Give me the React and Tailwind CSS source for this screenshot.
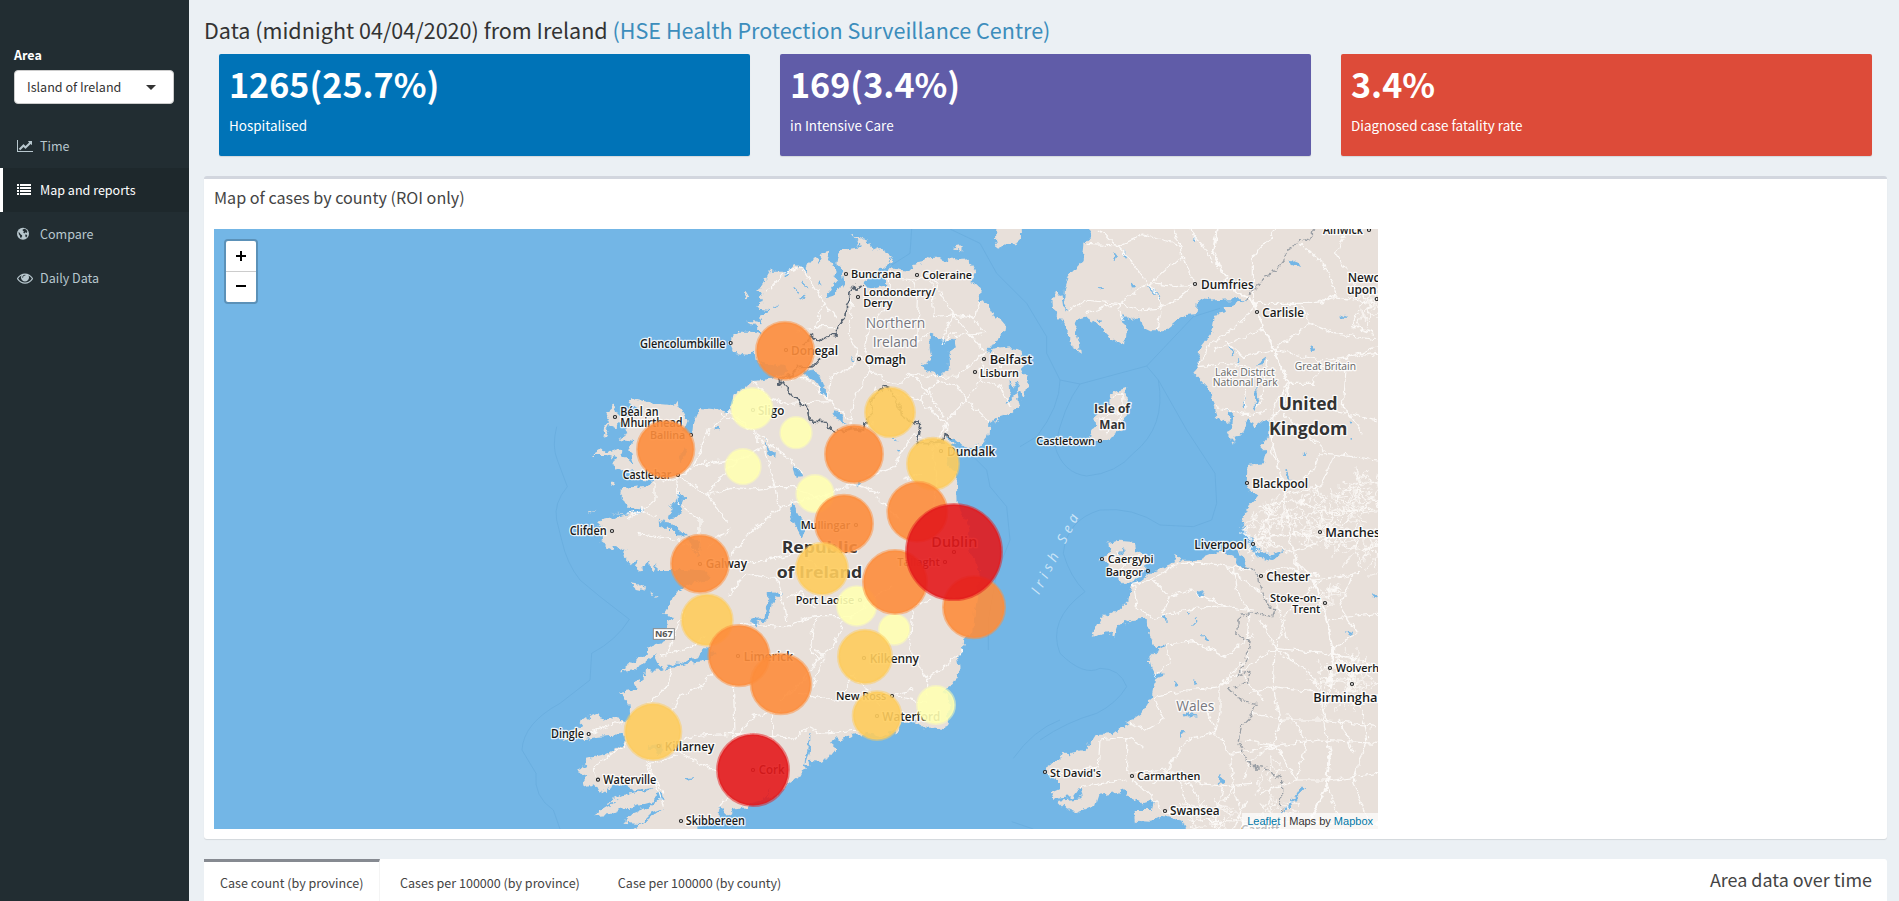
const F = "font-['Noto_Sans_CJK_SC','Source_Sans_Pro',sans-serif]";

/* ---------- map geometry (3 units per pixel) ---------- */
const IRELAND =
  'M1055 45L1068 50 1090 60 1108 66 1118 92 1138 84 1178 112 1172 124 1140 148 1115 168 1095 182 1094 202 1125 207 1155 200 1156 180 1142 165 1172 140 1200 150 1240 152 1236 136 1266 130 1290 112 1310 110 1340 124 1350 112 1375 120 1400 118 1415 132 1425 152 1418 185 1440 205 1435 236 1465 255 1485 292 1500 296 1516 315 1512 340 1495 356 1475 372 1466 386 1458 402 1485 388 1530 382 1552 384 1565 390 1570 430 1566 450 1586 468 1578 505 1570 535 1564 515 1552 518 1560 558 1530 582 1498 592 1468 612 1466 645 1445 672 1410 684 1378 668 1358 650 1340 654 1362 668 1345 690 1340 730 1372 760 1368 800 1370 850 1400 900 1410 925 1405 950 1408 990 1440 1050 1436 1100 1425 1170 1420 1230 1396 1255 1393 1280 1374 1310 1380 1355 1360 1390 1345 1405 1330 1412 1345 1440 1345 1480 1344 1500 1335 1525 1300 1520 1270 1528 1258 1512 1240 1506 1205 1510 1185 1545 1183 1530 1140 1552 1100 1540 1070 1545 1030 1555 1022 1566 1005 1558 990 1568 1010 1585 998 1600 990 1610 965 1625 950 1625 928 1622 932 1636 912 1630 920 1648 902 1654 905 1665 890 1672 865 1690 835 1725 800 1735 815 1705 790 1735 745 1750 740 1772 725 1758 700 1765 695 1785 680 1780 660 1762 650 1780 660 1792 640 1800 600 1805 570 1860 380 1860 400 1827 450 1795 490 1766 450 1782 420 1812 370 1808 400 1780 450 1762 470 1745 492 1738 488 1722 465 1720 462 1744 400 1760 360 1768 330 1782 278 1786 310 1766 345 1745 316 1750 345 1735 375 1722 440 1712 462 1700 400 1712 378 1698 345 1695 300 1720 285 1690 245 1697 265 1668 228 1652 265 1635 255 1620 305 1608 340 1590 378 1565 368 1545 300 1550 250 1558 225 1545 212 1555 185 1560 210 1537 240 1522 245 1505 270 1488 298 1477 296 1500 335 1492 372 1500 388 1490 385 1450 358 1418 410 1410 405 1388 430 1378 435 1350 475 1352 515 1342 560 1332 620 1325 650 1300 622 1280 600 1300 592 1316 570 1315 545 1332 520 1330 495 1346 475 1332 462 1305 430 1330 400 1348 362 1354 398 1325 440 1300 442 1282 470 1272 498 1265 492 1225 518 1188 488 1184 520 1135 538 1110 560 1095 625 1080 625 1055 560 1050 470 1050 468 1030 455 1055 450 1020 435 1045 405 1050 420 1018 395 1035 370 1010 376 985 362 990 325 980 300 962 310 945 290 930 305 918 290 905 335 895 385 886 330 878 365 885 410 880 436 868 385 860 372 845 365 830 370 805 455 795 466 780 390 775 402 750 370 758 340 735 350 715 320 705 275 705 300 690 320 697 355 685 365 700 385 725 400 738 388 690 400 662 350 655 385 640 370 600 345 622 330 615 310 655 315 622 330 604 318 578 345 555 352 580 390 590 412 562 380 545 400 538 450 550 510 555 530 547 550 580 560 600 548 630 576 645 580 610 600 560 640 565 690 577 700 530 760 480 840 470 862 455 850 430 800 435 770 420 765 385 745 405 700 398 684 365 715 335 755 335 790 345 770 320 740 305 790 310 780 290 810 270 765 265 775 250 795 245 782 232 790 220 765 208 785 200 810 155 850 155 856 170 885 135 910 145 922 158 920 140 930 118 945 110 955 132 970 100 988 95 980 120 998 130 1010 158 1000 165 1015 180 990 210 975 238 1000 230 1030 190 1026 160 1035 150 1012 130 1018 95 1040 88 1080 82 1075 65Z';
const BRITAIN =
  'M1778 0L1775 27 1770 50 1753 72 1748 120 1710 160 1695 205 1693 245 1708 270 1690 262 1684 225 1665 220 1657 240 1660 275 1690 308 1708 345 1718 385 1740 398 1735 360 1722 320 1728 298 1755 290 1790 312 1830 350 1875 378 1882 315 1865 300 1868 278 1890 300 1918 290 1926 320 1955 334 1990 334 2030 300 2055 285 2090 282 2095 235 2130 242 2180 238 2240 238 2200 255 2168 255 2175 280 2145 285 2135 340 2100 385 2098 440 2082 460 2120 500 2140 540 2150 585 2168 608 2188 600 2185 570 2200 585 2196 620 2182 630 2202 672 2205 650 2230 640 2245 592 2262 625 2300 595 2312 605 2306 650 2280 680 2300 700 2292 730 2242 735 2240 805 2262 820 2278 826 2240 870 2225 900 2232 918 2250 950 2270 985 2300 1005 2352 992 2315 1020 2272 1012 2245 975 2212 972 2205 985 2230 1020 2248 1048 2222 1042 2200 1010 2160 995 2090 1022 2045 1022 2022 1002 2025 1030 1980 1048 1945 1062 1895 1098 1885 1140 1860 1165 1805 1195 1775 1250 1830 1238 1842 1252 1850 1225 1890 1200 1940 1196 1945 1240 1965 1284 2000 1274 1970 1292 1948 1315 1960 1362 2002 1360 1966 1374 1956 1428 1925 1480 1880 1510 1840 1542 1790 1545 1782 1558 1750 1590 1710 1600 1706 1612 1690 1595 1682 1615 1635 1645 1650 1675 1680 1685 1680 1706 1650 1720 1660 1736 1720 1732 1742 1700 1748 1735 1675 1742 1700 1768 1728 1780 1785 1756 1795 1725 1858 1715 1866 1700 1885 1728 1930 1750 1962 1740 1955 1770 1900 1770 1905 1802 1950 1805 1990 1785 2040 1798 2055 1827 2065 1870 2680 1870 2680 0Z';
const ISLANDS = [
  'M1490 5L1562 5 1563 55 1548 68 1525 78 1515 76 1494 86 1488 60Z',
  'M1357 84L1385 78 1384 98 1376 88Z',
  'M1880 503L1880 545 1876 600 1860 635 1825 655 1800 665 1765 655 1782 625 1780 590 1805 570 1828 555 1830 520Z',
  'M1825 968L1860 962 1902 966 1905 990 1940 1008 1935 1050 1900 1085 1870 1092 1855 1075 1825 1050 1830 1030 1795 1020 1830 1000Z',
  'M388 1087L415 1090 438 1112 410 1106ZM448 1110L460 1118 455 1122ZM462 1128L476 1130 470 1136Z',
  'M735 218L752 230 738 240ZM330 785L352 785 335 795ZM260 878L290 872 270 880ZM820 96L834 104Z',
];
const WATER = [
  'M1295 345L1320 360 1360 358 1366 385 1344 400 1346 450 1318 466 1280 455 1270 435 1296 420 1290 380Z',
  'M1530 480L1540 508 1556 480 1545 530 1515 550 1532 518Z',
  'M905 455L945 450 965 480 985 535 965 512 948 484 918 466ZM1000 572L1015 575 1036 612 1008 590Z',
  'M480 905L510 910 532 925 556 945 525 945 505 925 488 925Z',
  'M538 820L552 838 530 890 505 896 518 855Z',
  'M560 955L598 960 605 985 590 1008 580 985Z',
  'M808 1122L845 1122 818 1142 810 1195 775 1200 772 1225 752 1198 795 1190Z',
  'M880 850L892 880 918 925 905 950 890 920 872 880Z',
  'M790 655L802 680 822 700 832 712 808 700ZM880 735L905 770 890 772ZM650 620L656 626 648 630ZM555 680L560 690 545 725 540 700Z',
  'M835 255L820 262 832 260ZM888 205L898 218 892 215ZM912 225L902 235 916 228ZM960 185L966 195 960 192ZM910 185L920 205 915 196Z',
  'M1055 410L1062 420 1056 418ZM1180 655L1195 665 1188 662ZM1080 780L1070 800 1082 790ZM1190 690L1200 695 1192 697Z',
  'M2370 120L2395 130 2402 142 2378 138ZM2268 500L2275 530 2265 570ZM2190 380L2202 405 2196 400ZM2268 435L2300 412 2290 430ZM2210 415L2216 435 2210 430ZM2235 530L2230 570 2228 560Z',
  'M1840 95L1850 108 1846 125ZM1870 95L1882 108 1878 118ZM1895 190L1905 195 1900 205ZM2520 285L2538 292 2522 292ZM2435 380L2448 386 2440 390ZM1795 205L1808 208 1798 210ZM1795 296L1805 300 1798 305Z',
  'M1944 200L1965 215 1980 235 1960 220ZM2080 55L2090 52 2084 62Z',
  'M2108 1112L2112 1130 2092 1118ZM2075 1215L2092 1195 2085 1205ZM2108 1245L2130 1262 2112 1258ZM2058 1180L2075 1182 2070 1186ZM1988 1190L2000 1192 1998 1202ZM1860 1000L1875 990 1868 1000Z',
  'M2340 1780L2385 1730 2405 1695 2420 1705 2400 1722 2360 1765Z',
  'M2075 1382L2092 1388 2080 1390ZM2020 1390L2032 1394 2024 1398ZM2052 1480L2095 1488 2060 1488ZM2160 1660L2172 1690 2158 1690ZM2540 1235L2558 1242 2548 1248ZM2044 1530L2052 1540 2042 1550Z',
  'M2410 695L2418 700 2410 702ZM2550 655L2556 660 2550 662ZM2545 605L2552 612 2546 612ZM2358 750L2372 778 2364 770ZM2625 1120L2632 1130 2622 1132Z',
  'M445 1580L485 1572 480 1600ZM555 1675L580 1674 562 1678ZM930 1540L918 1630 928 1600Z',
];
const ROADS = [
  'M850 160L905 140 960 230 972 250 945 320 1010 320M972 250L1015 300M850 160L800 215M960 320L890 330',
  'M1055 240L1048 350 1075 400 1060 440 990 472 985 540',
  'M1080 160L1240 180 1290 160 1360 285 1450 390M1240 180L1255 240 1250 360 1295 340M1295 160L1300 290 1360 285 1425 295 1440 240M1360 285L1320 370',
  'M1075 400L1110 450 1190 500 1230 460 1295 470 1370 468 1455 400M1450 400L1440 480 1400 540 1370 500 1310 480M1320 480L1255 540 1340 610 1340 650',
  'M1230 460L1280 510 1330 590M1340 600L1400 540 1470 610M1340 600L1310 680 1240 640M1370 330L1330 370M1410 290L1460 340 1360 350',
  'M1480 400L1500 440 1550 420M1440 480L1500 500 1530 560M1255 540L1180 520M1110 450L1060 540 1050 620M1170 150L1165 250 1110 320 1094 400',
  'M990 545L860 550 800 530 760 480M840 476L925 475 985 540 1050 600',
  'M580 745L625 630 690 575 755 630 850 700 905 760M660 580L755 630 790 680 825 800 835 865',
  'M490 790L600 735 720 720 790 680M530 770L535 850 600 900M530 770L625 825 680 905M580 745L620 720M620 825L680 750 720 720',
  'M620 825L690 805 760 810 830 800 885 800 980 850M835 865L870 850 990 820 1060 790M835 865L760 930 690 1010',
  'M600 735L700 720M465 790L465 840 380 900M410 940L540 960 600 1000M380 880L430 870 470 890',
  'M600 1030L700 1025 780 1025 900 1000 960 1040M680 1130L740 1060 830 1080 850 1150 860 1200M600 900L600 1000M690 930L640 960 620 990',
  'M720 1210L850 1220 945 1190 1060 1190 1120 1130 1180 1100M945 1190L930 1290 955 1315 1000 1280 1030 1210M860 1130L905 1115 945 1170',
  'M955 1315L900 1390 840 1440M900 1420L1000 1440 1120 1440 1240 1410M1060 1360L1030 1420M945 1290L975 1305 940 1400',
  'M700 1390L705 1540M815 1480L815 1560M640 1350L600 1400 540 1430 515 1470M515 1345L500 1400 445 1450M840 1470L760 1490 700 1560',
  'M500 1570L600 1545 700 1540 890 1555M880 1560L920 1520 960 1540 1080 1530M540 1600L620 1640 660 1660M440 1620L470 1680 490 1720',
  'M530 1610L440 1635 460 1670 490 1760M380 1570L280 1640 285 1670M270 1540L370 1500M480 1310L560 1285 620 1250M500 1300L550 1180M690 1720L650 1770',
  'M1280 1380L1390 1290M1280 1380L1280 1430M1280 1380L1230 1280 1240 1160 1290 1140M1180 1430L1280 1450M1280 1480L1240 1500M1060 1370L1100 1400 1140 1460',
  'M1100 770L1180 740 1240 640M1130 830L1200 900M1060 790L1140 820M1120 600L1090 640M1290 680L1310 760 1300 860M1210 780L1260 760M1100 600L1130 500',
  'M1760 70L1850 75 1900 130 1945 190 1985 250 1975 330M1860 250L1945 190 2030 200 2085 195M1755 280L1850 250 1920 270 1970 265 2030 240 2090 190M1710 270L1755 240 1850 250 1870 300',
  'M1850 80L1930 45 1990 60 2040 75 2045 110 2085 190M2045 110L1950 190M2150 27L2140 90 2170 170 2210 215 2265 250M2070 30L2120 90 2140 130M1800 27L1850 80M2020 27L2040 75',
  'M2330 27L2260 110 2260 250 2290 330 2325 390 2365 490 2365 560M2265 250L2450 250 2500 230 2630 250M2265 250L2210 320 2130 370 2100 430',
  'M2290 330L2140 390M2320 390L2230 410 2170 360M2320 390L2430 310 2500 340 2634 360M2430 310L2400 250M2320 390L2460 420 2634 400M2365 490L2440 490 2460 440 2634 380',
  'M2400 70L2470 130 2500 190 2510 230M2540 27L2510 100 2560 190 2600 240M2634 200L2580 260 2560 320 2620 340M2345 580L2420 640 2480 700 2634 720M2365 560L2450 560 2634 600',
  'M2360 500L2350 560 2310 600M2230 580L2270 580 2310 570M2360 490L2320 560 2315 700 2360 800 2350 830M2310 640L2350 800M2465 700L2440 750 2400 790',
  'M2230 500L2235 570M2150 560L2230 580M2300 420L2290 520 2270 560M2100 440L2180 430 2250 440M2540 420L2530 560 2590 640',
  'M2240 1000L2300 900 2360 820 2460 800 2500 710M2270 860L2390 840 2480 880 2634 870M2260 960L2380 940 2480 950 2634 930M2300 870L2310 960 2360 1000 2480 960M2350 830L2370 960 2400 1060',
  'M2030 1030L2110 1030 2200 1040 2280 1060 2360 1040 2460 1070M1900 1090L1950 1080 2040 1030M1900 1090L1910 1160 1960 1195M1960 1080L2010 1130 1990 1180',
  'M1960 1195L2080 1165 2180 1160 2260 1170M2010 1130L2060 1110 2110 1130 2180 1160M2200 1040L2210 1120 2250 1180 2240 1260M2180 1040L2270 1110 2330 1150 2360 1260',
  'M2000 1275L2080 1265 2180 1310 2260 1240M2000 1275L2010 1330 1960 1370M1960 1430L2060 1410 2160 1400 2200 1370 2325 1285M2160 1400L2160 1480 2145 1535M2160 1400L2250 1300',
  'M2145 1535L2060 1560 2000 1650 1960 1690M2145 1535L2190 1600 2200 1700 2180 1740M2145 1535L2120 1460M1960 1430L1990 1500 1940 1530 1890 1510M1800 1560L1880 1550 1930 1580',
  'M1800 1560L1795 1640 1700 1660 1640 1660M1880 1550L1880 1660 2000 1650 2100 1690 2180 1700 2250 1690M1880 1680L1740 1700M1900 1680L2000 1780 2100 1760M2040 1650L2110 1760 2170 1820',
  'M2040 1680L2070 1790M2170 1700L2140 1827M2200 1690L2230 1827M2240 1740L2200 1827M2060 1800L2634 1810M2190 1600L2320 1580 2460 1560 2634 1570',
  'M2325 1285L2480 1300 2560 1310M2325 1285L2280 1200M2325 1285L2320 1400 2340 1500 2320 1580M2325 1285L2360 1180 2460 1080M2325 1285L2440 1370 2480 1500',
  'M2380 1020L2440 1080 2480 1200 2500 1300 2490 1400 2470 1500 2490 1600 2480 1700 2420 1827M2480 1200L2634 1180M2440 1080L2580 1060M2500 1300L2634 1340M2460 1500L2634 1520',
  'M2330 1580L2390 1680 2480 1680 2634 1660M2320 1580L2250 1620 2230 1680M2260 1480L2340 1500 2460 1500M2240 1560L2330 1580M2250 1420L2320 1400 2480 1420M2480 1690L2530 1827',
  'M2560 1060L2520 1160 2570 1240 2500 1290M2580 1440L2600 1560 2560 1680 2600 1800M2520 1500L2560 1600M2360 1480L2420 1560 2390 1680M2230 1370L2290 1440M2280 1720L2340 1700 2390 1680',
  'M1835 530L1868 520 1870 570 1840 620M1785 600L1860 575M1820 640L1870 590M1850 990L1870 1030 1860 1070M1830 1020L1920 1010',
];
/* centre x, centre y, spread, street count */
const HUBS = [
  [2475, 905, 115, 90], [2590, 830, 70, 40], [2530, 1385, 90, 80], [2300, 890, 60, 26], [2275, 960, 40, 22],
  [2620, 270, 50, 24], [2480, 1130, 35, 14], [2330, 1780, 70, 20], [2590, 1000, 80, 30], [2140, 1790, 80, 26], [2290, 1640, 60, 10],
];
/* short streets scattered around the large conurbations */
const STREETS = (() => {
  let seed = 7;
  const rnd = () => {
    seed = (seed * 16807) % 2147483647;
    return seed / 2147483647;
  };
  let d = '';
  for (const [cx, cy, r, n] of HUBS) {
    for (let i = 0; i < n; i++) {
      const a = rnd() * 6.283;
      const q = r * Math.sqrt(rnd());
      let x = cx + q * Math.cos(a);
      let y = cy + q * Math.sin(a) * 0.75;
      let t = rnd() * 6.283;
      d += `M${x.toFixed(0)} ${y.toFixed(0)}L`;
      for (let k = 0; k < 3; k++) {
        t += (rnd() - 0.5) * 1.2;
        x += 15 * Math.cos(t);
        y += 15 * Math.sin(t);
        d += `${x.toFixed(0)} ${y.toFixed(0)} `;
      }
    }
  }
  return d;
})();
const SEA_LINES = [
  'M170 620Q155 680 172 720L202 800Q160 850 170 900L185 960Q200 1030 240 1080L300 1130 388 1198Q350 1260 275 1300L270 1380 180 1450Q70 1510 66 1590L108 1660Q100 1730 160 1770L180 1827',
  'M1235 27L1230 100 1175 135M1350 27L1440 70 1490 160 1580 250 1640 350 1640 400 1680 480 1740 492 1940 438 2080 290 2160 265',
  'M1400 690L1460 750 1470 800 1520 860 1530 960 1490 1060 1465 1200 1465 1290M1680 480Q1680 560 1610 650L1560 680',
  'M1740 492Q1690 560 1665 680 1690 760 1760 768 1850 760 1900 700 2000 620 1975 480L1940 438M1975 480L2060 630 2145 760 2150 850 2135 900 2080 920 1980 915Q1900 860 1800 870 1700 900 1690 1000 1710 1070 1755 1115 1640 1200 1680 1300 1750 1370 1800 1345 1860 1345 1880 1400 1850 1450 1790 1480 1700 1505 1620 1560 1560 1580',
  'M1540 1615Q1600 1530 1680 1500M1535 1805L1600 1827',
];
const BORDER =
  'M1088 195L1070 205 1060 200 1050 215 1048 250 1040 255 1038 290 1012 325 1014 348 988 345 955 365 935 350 920 362 908 375M960 415L938 440 890 443 878 465 850 470 840 482 852 500 875 525 888 530 900 552 922 560 928 600 970 602 985 618 1005 636 1060 625 1090 630 1096 605 1120 580 1110 545 1150 500 1170 508 1200 560 1205 585 1240 610 1250 605 1262 620 1255 668 1290 668 1330 665 1335 645 1352 655';
const UK_BORDER =
  'M2442 27L2430 60 2400 55 2380 80 2352 100 2355 120 2330 150 2300 165 2280 190 2260 205 2238 240M2230 1040L2275 1060 2280 1100 2300 1155 2330 1165 2320 1190 2270 1180 2220 1185 2210 1245 2250 1265 2245 1290 2215 1365 2255 1350 2245 1385 2190 1405 2220 1440 2265 1450 2260 1480 2225 1520 2215 1560 2240 1620 2270 1645 2290 1635 2345 1680 2345 1780';

const C = { y: '#ffffb2', g: '#fecc5c', o: '#fd8d3c', r: '#e31a1c' };
const CASES = [
  [756, 566, 65, 'y'], [888, 638, 50, 'y'], [729, 740, 56, 'y'], [945, 821, 59, 'y'], [1070, 1158, 62, 'y'], [1183, 1228, 49, 'y'], [1308, 1455, 60, 'y'],
  [1170, 577, 78, 'g'], [1299, 731, 81, 'g'], [621, 1200, 80, 'g'], [1095, 1310, 84, 'g'], [1131, 1487, 76, 'g'], [459, 1535, 88, 'g'],
  [855, 392, 90, 'o'], [497, 688, 89, 'o'], [1062, 702, 90, 'o'], [1032, 911, 90, 'o'], [966, 1046, 81, 'g'], [1252, 875, 93, 'o'], [1185, 1086, 99, 'o'], [1422, 1162, 96, 'o'],
  [600, 1031, 90, 'o'], [717, 1307, 95, 'o'], [843, 1392, 94, 'o'],
  [1362, 996, 147, 'r'], [759, 1650, 111, 'r'],
];

/* text, left, width, baseline, size */
const TOWNS = [
  ['Glencolumbkille', 420, 257, 382, 35], ['Donegal', 873, 141, 404, 37], ['Sligo', 774, 79, 583, 35], ['Béal an', 361, 115, 588, 35], ['Mhuirthead', 361, 187, 621, 35],
  ['Ballina', 450, 106, 656, 34], ['Castlebar', 368, 146, 776, 35], ['Clifden', 209, 111, 945, 35], ['Galway', 617, 124, 1044, 36], ['Mullingar', 902, 149, 927, 34],
  ['Port Laoise', 887, 176, 1151, 34], ['Limerick', 731, 148, 1321, 36], ['Dingle', 153, 99, 1554, 35], ['Killarney', 494, 149, 1591, 35], ['Waterville', 310, 159, 1692, 35],
  ['Cork', 776, 78, 1662, 37], ['Skibbereen', 557, 178, 1815, 35], ['Buncrana', 1053, 151, 174, 34], ['Coleraine', 1267, 149, 176, 34], ['Londonderry/', 1090, 217, 226, 34],
  ['Derry', 1090, 88, 259, 34], ['Omagh', 1094, 124, 430, 37], ['Belfast', 1469, 128, 431, 39], ['Lisburn', 1439, 118, 470, 34], ['Dundalk', 1341, 145, 707, 35],
  ['Dublin', 1294, 138, 980, 42], ['Tallaght', 1192, 128, 1037, 34], ['Kilkenny', 1109, 148, 1327, 36], ['New Ross', 1008, 151, 1439, 34], ['Waterford', 1147, 174, 1502, 36],
  ['Castletown', 1609, 176, 675, 34], ['Dumfries', 2103, 158, 207, 37], ['Carlisle', 2287, 125, 290, 36], ['Blackpool', 2257, 167, 802, 36], ['Alnwick', 2469, 120, 42, 35],
  ['Newcastle', 2543, 178, 185, 36], ['upon Tyne', 2541, 180, 222, 36], ['Manchester', 2476, 218, 951, 37], ['Liverpool', 2083, 158, 985, 36], ['Caergybi', 1823, 138, 1029, 34],
  ['Bangor', 1817, 112, 1066, 34], ['Chester', 2299, 131, 1082, 35], ['Stoke-on-', 2310, 151, 1144, 34], ['Trent', 2377, 84, 1177, 34], ['Wolverhampton', 2507, 254, 1355, 34],
  ['Birmingham', 2440, 229, 1445, 37], ["St David's", 1650, 153, 1670, 34], ['Carmarthen', 1911, 190, 1679, 34], ['Swansea', 2010, 149, 1785, 35], ['Cardiff', 2223, 115, 1840, 37],
];
const DOTS = [
  [692, 369], [858, 390], [759, 570], [345, 591], [573, 645], [534, 765], [336, 933], [600, 1032], [1068, 915], [1080, 1140], [714, 1308], [266, 1542], [476, 1578], [294, 1679],
  [759, 1650], [543, 1803], [1038, 162], [1251, 165], [1074, 231], [1077, 417], [1452, 417], [1425, 456], [1323, 693], [1362, 996], [1335, 1026], [1092, 1314], [1176, 1428], [1131, 1488],
  [1800, 663], [2085, 192], [2271, 276], [2241, 789], [2607, 30], [2630, 237], [2460, 936], [2259, 972], [1806, 1017], [1944, 1053], [2283, 1068], [2475, 1149], [2490, 1344], [2556, 1392],
  [1635, 1656], [1896, 1668], [1995, 1773],
];
const REGIONS = [
  ['Northern', 1097, 179, 323, 41, 'font-normal fill-[#77777f]'], ['Ireland', 1118, 135, 382, 41, 'font-normal fill-[#77777f]'], ['Wales', 2029, 114, 1472, 41, 'font-normal fill-[#77777f]'],
  ['Lake District', 2145, 179, 467, 31, 'font-medium fill-[#666]'], ['National Park', 2138, 195, 497, 31, 'font-medium fill-[#666]'], ['Great Britain', 2384, 184, 451, 32, 'font-medium fill-[#666]'],
  ['Republic', 845, 228, 999, 50, 'font-bold fill-[#333]'], ['of Ireland', 830, 257, 1073, 50, 'font-bold fill-[#333]'],
  ['United', 2336, 177, 570, 51, 'font-bold fill-[#333]'], ['Kingdom', 2307, 235, 644, 51, 'font-bold fill-[#333]'],
  ['Isle of', 1782, 108, 578, 36, 'font-bold fill-[#333]'], ['Man', 1798, 78, 627, 36, 'font-bold fill-[#333]'],
];

function CaseMap() {
  return (
    <svg className="block h-full w-full font-['Open_Sans',sans-serif]" viewBox="-858 27 3492 1800">
      <filter id="rough" filterUnits="userSpaceOnUse" x="-858" y="0" width="3540" height="1870">
        <feTurbulence type="fractalNoise" baseFrequency="0.045" numOctaves="3" seed="4" />
        <feDisplacementMap in="SourceGraphic" scale="24" xChannelSelector="R" yChannelSelector="G" />
      </filter>
      <rect x="-858" y="27" width="3492" height="1800" fill="#73b6e6" />
      <g fill="none" stroke="#5ea3d6" strokeWidth="2.5" opacity=".5">
        {SEA_LINES.map((d) => <path key={d} d={d} />)}
      </g>
      <g filter="url(#rough)">
        <g fill="#e8e0da">
          <path d={IRELAND} />
          <path d={BRITAIN} />
          {ISLANDS.map((d) => <path key={d} d={d} />)}
        </g>
        <g fill="#73b6e6" stroke="#73b6e6" strokeWidth="2.5">
          {WATER.map((d) => <path key={d} d={d} />)}
        </g>
        <g fill="none" stroke="#fbf9f7" strokeWidth="3.6" strokeLinejoin="round">
          {ROADS.map((d) => <path key={d} d={d} />)}
          <path d={STREETS} strokeWidth="2.6" />
          <path d="M2150 27L2140 90 2170 170 2210 215 2265 250 2290 330 2325 390 2365 490 2365 560M2440 1080L2480 1200 2500 1300 2490 1400M2490 1600L2480 1700 2420 1827" strokeWidth="6" />
        </g>
        <path d={BORDER} fill="none" stroke="#56626f" strokeWidth="5" />
        <path d={UK_BORDER} fill="none" stroke="#9a9fa5" strokeWidth="4" strokeDasharray="16 5" />
      </g>
      <g fill="#fff" stroke="#222" strokeWidth="3.5">
        {DOTS.map(([x, y]) => <circle key={`${x}-${y}`} cx={x} cy={y} r="4.5" />)}
      </g>
      <rect x="460" y="1226" width="63" height="32" fill="#fff" stroke="#8b8b8b" strokeWidth="3" />
      <text x="465" y="1251" fontSize="26" textLength="53" lengthAdjust="spacingAndGlyphs" className="fill-[#555] font-bold">N67</text>
      <g stroke="#fff" strokeOpacity=".85" strokeWidth="8" strokeLinejoin="round" paintOrder="stroke">
        {TOWNS.map(([t, x, w, y, s]) => (
          <text key={t} x={x} y={y + 1} fontSize={s} textLength={w} lengthAdjust="spacingAndGlyphs" className="fill-[#1a1a1a] font-semibold">{t}</text>
        ))}
        {REGIONS.map(([t, x, w, y, s, c]) => (
          <text key={t} x={x} y={y} fontSize={s} textLength={w} lengthAdjust="spacingAndGlyphs" className={c}>{t}</text>
        ))}
      </g>
      <text transform="translate(1617 1126) rotate(-63)" fontSize="42" textLength="264" className="fill-[#cde5f7] italic">Irish Sea</text>
      {CASES.map(([x, y, r, c]) => (
        <circle key={`${x}-${y}`} cx={x} cy={y} r={r - 4.5} fill={C[c]} fillOpacity=".9" stroke={C[c]} strokeOpacity=".5" strokeWidth="9" />
      ))}
    </svg>
  );
}

/* ---------- icons ---------- */
const LineChart = () => (
  <svg width="16" height="14" viewBox="0 0 2048 1792" fill="currentColor">
    <path d="M2048 1536v128h-2048v-1536h128v1408h1920zM1920 288v435q0 21-19.5 29.5t-35.5-7.5l-121-121-633 633q-10 10-23 10t-23-10l-233-233-416 416-192-192 585-585q10-10 23-10t23 10l233 233 464-464-121-121q-16-16-7.5-35.5t29.5-19.5h435q14 0 23 9t9 23z" />
  </svg>
);
const List = () => (
  <svg width="14" height="14" viewBox="0 0 14 14" fill="currentColor">
    <path d="M0 1h2v2H0zM3 1h11v2H3zM0 4h2v2H0zM3 4h11v2H3zM0 7h2v2H0zM3 7h11v2H3zM0 10h2v2H0zM3 10h11v2H3z" />
  </svg>
);
const Globe = () => (
  <svg width="12" height="14" viewBox="0 0 12 14">
    <circle cx="6" cy="6.8" r="6" fill="currentColor" />
    <path d="M5.6 2.4L7.6 1.8 9.4 2.8 10.4 4.8 9.6 6 8.4 5.2 7.4 6.4 6.2 5.4 7 4.6 5.8 3.8zM1.6 4.8L2.8 6 3.6 7.2 5 8.2 5.2 9.2 4.4 10.2 4.2 11.4 3.2 10.2 2.8 8.6 1.8 7.2zM8.2 7.6L10 7.8 10.2 9 9.2 10.4 8.4 9.6z" fill="#222d32" />
  </svg>
);
const Eye = () => (
  <svg width="16" height="16" viewBox="0 0 1792 1792" fill="currentColor">
    <path d="M1664 960q-152-236-381-353 61 104 61 225 0 185-131.5 316.5t-316.5 131.5-316.5-131.5-131.5-316.5q0-121 61-225-229 117-381 353 133 205 333.5 326.5t434.5 121.5 434.5-121.5 333.5-326.5zM944 576q0-20-14-34t-34-14q-125 0-214.5 89.5t-89.5 214.5q0 20 14 34t34 14 34-14 14-34q0-86 61-147t147-61q20 0 34-14t14-34zM1792 960q0 34-20 69-140 230-376.5 368.5t-499.5 138.5-499.5-139-376.5-368q-20-35-20-69t20-69q140-229 376.5-368t499.5-139 499.5 139 376.5 368q20 35 20 69z" />
  </svg>
);

function NavItem({ icon, label, active }) {
  return (
    <a className={`flex h-11 items-center border-l-[3px] pl-[14px] text-[12.55px] ${active ? 'border-white bg-[#1e282c] text-white' : 'border-transparent text-[#b8c7ce]'}`}>
      <span className="flex w-[23px]">{icon}</span>
      {label}
    </a>
  );
}

function StatBox({ value, label, color }) {
  return (
    <div className={`h-[102px] rounded-[2px] px-[10px] pt-2 text-white shadow-[0_1px_1px_rgba(0,0,0,0.1)] ${color}`}>
      <div className="text-[34.1px] font-bold leading-[42px]">{value}</div>
      <div className="mt-[11px] text-[13.45px] leading-5">{label}</div>
    </div>
  );
}

export default function App() {
  return (
    <div className={`flex h-[901px] w-full overflow-hidden bg-[#ebf0f4] text-[#333] ${F}`}>
      <aside className="w-[189px] shrink-0 bg-[#222d32] pt-[45px]">
        <div className="pl-[14px] pr-[15px]">
          <div className="text-[12.55px] font-bold leading-5 text-white">Area</div>
          <div className="mt-[5px] flex h-[34px] items-center justify-between rounded-[4px] border border-[#ccc] bg-white pl-3 pr-[17px] text-[12.55px] leading-5">
            Island of Ireland
            <span className="border-x-[5px] border-t-[5px] border-x-transparent border-t-[#333]" />
          </div>
        </div>
        <nav className="mt-5">
          <NavItem icon={<LineChart />} label="Time" />
          <NavItem icon={<List />} label="Map and reports" active />
          <NavItem icon={<Globe />} label="Compare" />
          <NavItem icon={<Eye />} label="Daily Data" />
        </nav>
      </aside>
      <main className="flex-1 pl-[15px] pr-3 pt-[13px]">
        <h1 className="h-[41px] whitespace-nowrap text-[21.55px] leading-[34px]">
          Data (midnight 04/04/2020) from Ireland <a className="text-[#3c8dbc]">(HSE Health Protection Surveillance Centre)</a>
        </h1>
        <div className="grid grid-cols-3 gap-[30px] px-[15px]">
          <StatBox value="1265(25.7%)" label="Hospitalised" color="bg-[#0073b7]" />
          <StatBox value="169(3.4%)" label="in Intensive Care" color="bg-[#605ca8]" />
          <StatBox value="3.4%" label="Diagnosed case fatality rate" color="bg-[#dd4b39]" />
        </div>
        <section className="mt-5 h-[663px] rounded-[3px] border-t-[3px] border-[#d2d6de] bg-white px-[10px] shadow-[0_1px_1px_rgba(0,0,0,0.1)]">
          <h2 className="h-[50px] pt-2 text-[16.15px] leading-5 text-[#444]">Map of cases by county (ROI only)</h2>
          <div className="relative h-[600px] w-[1164px] overflow-hidden">
            <CaseMap />
            <div className="absolute left-[10px] top-[10px] flex flex-col rounded-[4px] border-2 border-[#5b91b8] bg-white text-black">
              <span className="flex h-[31px] w-[30px] items-center justify-center border-b border-[#ccc]">
                <svg width="12" height="12" stroke="currentColor" strokeWidth="2"><path d="M6 1v10M1 6h10" /></svg>
              </span>
              <span className="flex h-[30px] w-[30px] items-center justify-center pb-0.5">
                <svg width="12" height="12" stroke="currentColor" strokeWidth="2"><path d="M1 6h10" /></svg>
              </span>
            </div>
            <div className="absolute bottom-0 right-0 h-4 bg-white/70 px-[5px] font-['Liberation_Sans',sans-serif] text-[11px] leading-4 text-[#333]">
              <a className="text-[#0078a8]">Leaflet</a> | Maps by <a className="text-[#0078a8]">Mapbox</a>
            </div>
          </div>
        </section>
        <section className="mt-5 flex h-[60px] rounded-t-[3px] bg-white text-[12.55px] leading-5 text-[#444]">
          <a className="w-[176px] border-r border-t-[3px] border-r-[#f4f4f4] border-t-[#868a91] pl-4 pt-[11px]">Case count (by province)</a>
          <a className="pl-5 pt-[14px]">Cases per 100000 (by province)</a>
          <a className="pl-[38px] pt-[14px]">Case per 100000 (by county)</a>
          <div className="ml-auto pr-[15px] pt-[10px] text-[17.95px]">Area data over time</div>
        </section>
      </main>
    </div>
  );
}
